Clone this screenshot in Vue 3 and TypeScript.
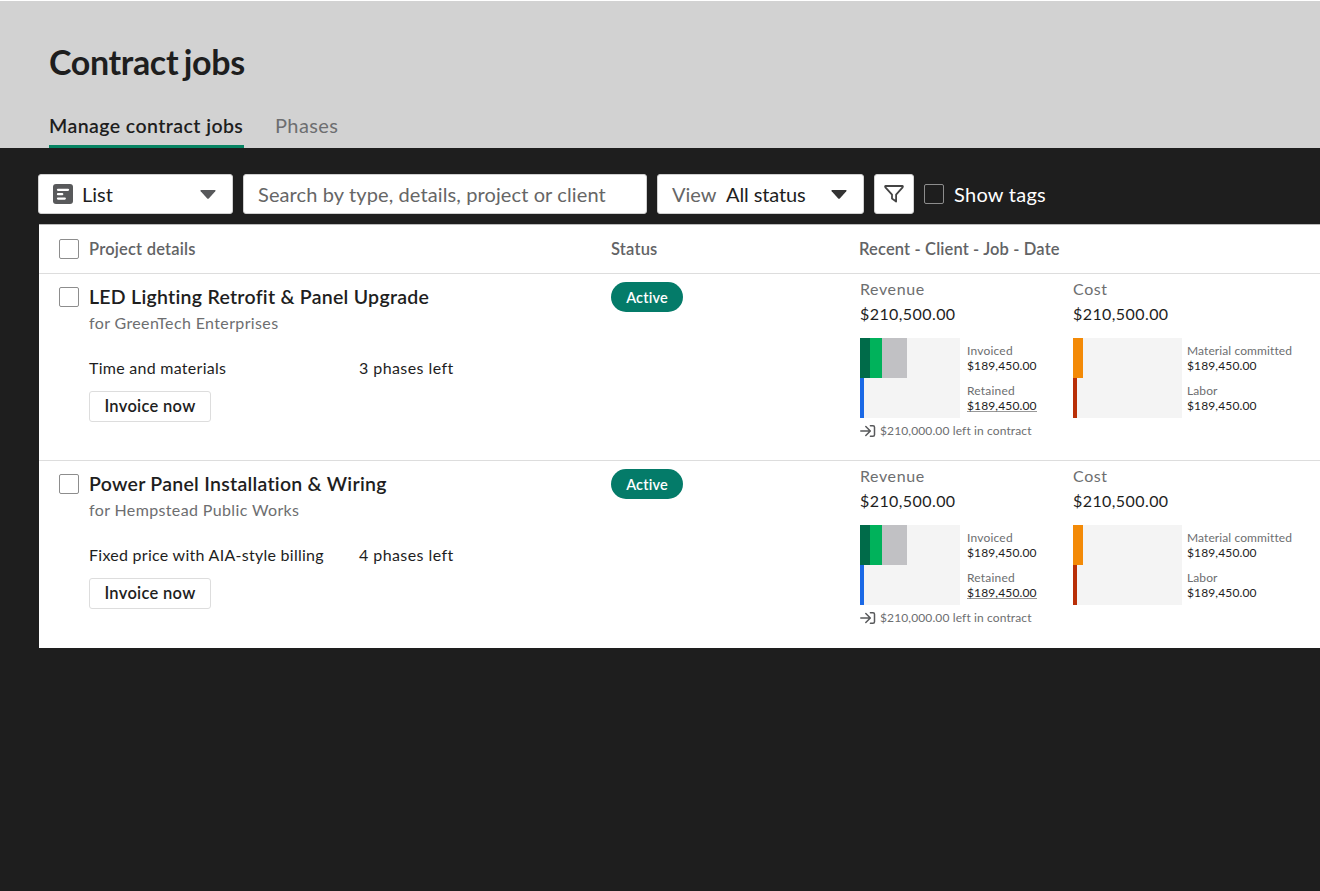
<script setup lang="ts">
interface Entry { label: string; amount: string; linked?: boolean }
interface Job { title: string; client: string; billing: string; phases: string }

const jobs: Job[] = [
  { title: 'LED Lighting Retrofit & Panel Upgrade', client: 'for GreenTech Enterprises', billing: 'Time and materials', phases: '3 phases left' },
  { title: 'Power Panel Installation & Wiring', client: 'for Hempstead Public Works', billing: 'Fixed price with AIA-style billing', phases: '4 phases left' },
]
const revenue: Entry[] = [
  { label: 'Invoiced', amount: '$189,450.00' },
  { label: 'Retained', amount: '$189,450.00', linked: true },
]
const cost: Entry[] = [
  { label: 'Material committed', amount: '$189,450.00' },
  { label: 'Labor', amount: '$189,450.00' },
]
</script>

<template>
  <div class="page">
    <header class="head">
      <h1>Contract jobs</h1>
      <nav class="tabs">
        <a class="tab on">Manage contract jobs</a>
        <a class="tab">Phases</a>
      </nav>
    </header>
    <div class="tools">
      <div class="field mode">
        <svg width="20" height="20" viewBox="0 0 20 20"><rect width="20" height="20" rx="3" fill="#58595b" /><path d="M5 5.8H15M5 10.2H9.2M5 14.6H11.8" stroke="#fff" stroke-width="2.3" stroke-linecap="round" fill="none" /></svg>
        <span class="name">List</span>
        <svg class="caret grey" width="16" height="9" viewBox="0 0 16 9"><path d="M1 0H15Q16 .3 15.3 1.2L8.8 8.5Q8 9.2 7.2 8.5L.7 1.2Q0 .3 1 0Z" /></svg>
      </div>
      <div class="field search">Search by type, details, project or client</div>
      <div class="field view">
        <span class="lbl">View</span><span class="val">All status</span>
        <svg class="caret" width="16" height="9" viewBox="0 0 16 9"><path d="M1 0H15Q16 .3 15.3 1.2L8.8 8.5Q8 9.2 7.2 8.5L.7 1.2Q0 .3 1 0Z" /></svg>
      </div>
      <div class="field filter">
        <svg width="20" height="18" viewBox="0 0 20 18"><path d="M1.8 1H18.2Q19.4 1.2 18.6 2.3L12.1 9.6V16.6L8 13.6V9.6L1.4 2.3Q.6 1.2 1.8 1Z" /></svg>
      </div>
      <span class="box dark"></span><span class="show">Show tags</span>
    </div>
    <main class="panel">
      <div class="row top">
        <span class="box"></span><span class="c1">Project details</span><span class="c2">Status</span><span class="c3">Recent - Client - Job - Date</span>
      </div>
      <section v-for="job in jobs" :key="job.title" class="row job">
        <span class="box"></span>
        <div class="c1">
          <h2>{{ job.title }}</h2>
          <p class="client">{{ job.client }}</p>
          <div class="meta"><span class="billing">{{ job.billing }}</span><span class="phases">{{ job.phases }}</span></div>
          <button>Invoice now</button>
        </div>
        <div class="c2"><span class="pill">Active</span></div>
        <div class="c3 money">
          <div class="rev">
            <p class="cap">Revenue</p>
            <p class="sum">$210,500.00</p>
            <div class="graph">
              <div class="chart">
                <div class="bar"><i class="deep"></i><i class="green"></i><i class="silver"></i></div>
                <div class="bar"><i class="blue"></i></div>
              </div>
              <div class="list"><div v-for="e in revenue" :key="e.label" class="entry"><span>{{ e.label }}</span><b :class="{ linked: e.linked }">{{ e.amount }}</b></div></div>
            </div>
            <p class="left">
              <svg width="16" height="12" viewBox="0 0 16 12"><path d="M.8 6H10M5.8 1.5L10.3 6L5.8 10.5M10.4 .8H13Q14.5 .8 14.5 2.3V9.7Q14.5 11.2 13 11.2H10.4" /></svg>
              <span>$210,000.00 left in contract</span>
            </p>
          </div>
          <div class="cost">
            <p class="cap">Cost</p>
            <p class="sum">$210,500.00</p>
            <div class="graph">
              <div class="chart wide">
                <div class="bar"><i class="orange"></i></div>
                <div class="bar"><i class="red"></i></div>
              </div>
              <div class="list"><div v-for="e in cost" :key="e.label" class="entry"><span>{{ e.label }}</span><b>{{ e.amount }}</b></div></div>
            </div>
          </div>
        </div>
      </section>
    </main>
  </div>
</template>

<style>
body { margin: 0; background: #1e1e1e; overflow: hidden; }
</style>
<style scoped>
.page { width: 1320px; height: 891px; overflow: hidden; background: #1e1e1e; color: #1e1e1e; font-family: Lato, "Open Sans", sans-serif; }
h1, h2, p { margin: 0; }
.head { box-sizing: border-box; height: 148px; border-top: 1px solid #fff; background: #d2d2d2; padding: 40px 49px 0; display: flex; flex-direction: column; justify-content: space-between; }
h1 { font-size: 34px; line-height: 42px; font-weight: 700; letter-spacing: -.35px; word-spacing: -2.4px; }
.tabs { display: flex; gap: 31px; }
.tab { height: 34px; line-height: 23px; font-size: 20px; letter-spacing: .4px; color: #6d6e70; }
.tab.on { box-sizing: border-box; width: 195px; font-size: 19.5px; line-height: 24px; letter-spacing: .43px; color: #1e1e1e; font-weight: 600; border-bottom: 3px solid #078463; border-radius: 2px 2px 0 0; white-space: nowrap; }
.tools { display: flex; align-items: center; height: 40px; padding: 26px 0 0 38px; font-size: 20px; }
.field { box-sizing: border-box; height: 40px; display: flex; align-items: center; background: #fff; border: 1px solid #d0d0d0; border-radius: 3px; margin-right: 10px; white-space: nowrap; }
.mode { width: 195px; padding: 0 16px 0 14px; }
.name { margin-left: 9px; }
.caret { margin-left: auto; fill: #333; }
.caret.grey { fill: #58595b; }
.search { width: 404px; padding-left: 14px; color: #666; letter-spacing: .11px; }
.view { width: 207px; padding: 0 16px 0 14px; }
.lbl { color: #666; width: 54px; }
.val { letter-spacing: -.1px; }
.filter { width: 40px; justify-content: center; }
.filter path { fill: none; stroke: #444; stroke-width: 1.8; stroke-linejoin: round; }
.box { box-sizing: border-box; flex: none; width: 20px; height: 20px; border: 1px solid #8d8d8d; border-radius: 2px; background: #fff; }
.dark { background: transparent; }
.show { color: #fff; margin-left: 10px; letter-spacing: .27px; }
.panel { box-sizing: border-box; margin: 10px 0 0 39px; border-top: 1px solid #bbb; background: #fff; height: 424px; overflow: hidden; }
.row { display: flex; padding-left: 20px; }
.c1 { width: 522px; margin-left: 10px; flex: none; }
.c2 { width: 248px; flex: none; }
.top { height: 49px; align-items: center; border-bottom: 1px solid #ddd; box-sizing: border-box; font-size: 16.5px; font-weight: 600; letter-spacing: .2px; color: #626365; }
.top .c3 { letter-spacing: .14px; }
.job { height: 187px; box-sizing: border-box; border-bottom: 1px solid #ddd; padding-top: 13px; }
.job:last-child { border-bottom: 0; }
h2 { margin-top: -1px; font-size: 19.5px; line-height: 22px; font-weight: 600; letter-spacing: .27px; }
.client { font-size: 16px; line-height: 20px; margin-top: 5px; letter-spacing: .37px; color: #6d6e70; }
.meta { display: flex; font-size: 16px; line-height: 20px; margin-top: 25px; letter-spacing: .27px; }
.billing { width: 270px; }
.phases { letter-spacing: .43px; }
button { display: block; box-sizing: border-box; width: 122px; height: 31px; margin-top: 13px; padding: 0; border: 1px solid #ddd; border-radius: 3px; background: #fff; font: 600 16.5px/27px Lato, sans-serif; letter-spacing: .3px; color: #1e1e1e; }
.pill { display: block; width: 72px; height: 30px; margin-top: -5px; border-radius: 15px; background: #047b69; color: #fff; text-align: center; font: 600 14.5px/31px Lato, sans-serif; letter-spacing: .15px; }
.money { display: flex; margin: -7px 0 0 1px; }
.rev { width: 213px; }
.cap { font-size: 16px; line-height: 20px; letter-spacing: .6px; color: #6d6e70; margin-top: -1px; }
.sum { font-size: 16px; line-height: 24px; margin-top: 3px; letter-spacing: .42px; }
.graph { display: flex; height: 80px; margin-top: 12px; }
.chart { width: 100px; height: 80px; background: #f4f4f4; }
.wide { width: 109px; }
.bar { display: flex; height: 40px; }
.deep { width: 10px; background: #006b49; }
.green { width: 12px; background: #00b25b; }
.silver { width: 25px; background: #c1c1c4; }
.blue { width: 4px; background: #1b69e6; }
.orange { width: 10px; background: #f38a07; }
.red { width: 4px; background: #b92f08; }
.list { margin: 5px 0 0 7px; font-size: 12px; letter-spacing: .13px; white-space: nowrap; }
.cost .list { margin-left: 5px; }
.cost .entry span { letter-spacing: .1px; }
.entry { height: 40px; line-height: 15px; color: #6d6e70; }
.entry span, .entry b { display: block; width: max-content; }
.entry span { letter-spacing: .2px; }
.entry b { font-weight: 400; color: #1e1e1e; }
.entry .linked { border-bottom: 1px solid #999; height: 13px; }
.left { display: flex; gap: 4px; align-items: center; margin-top: 5px; font-size: 12px; line-height: 16px; letter-spacing: .12px; color: #6d6e70; }
.left path { fill: none; stroke: #58595b; stroke-width: 1.5; stroke-linecap: round; stroke-linejoin: round; }
</style>
